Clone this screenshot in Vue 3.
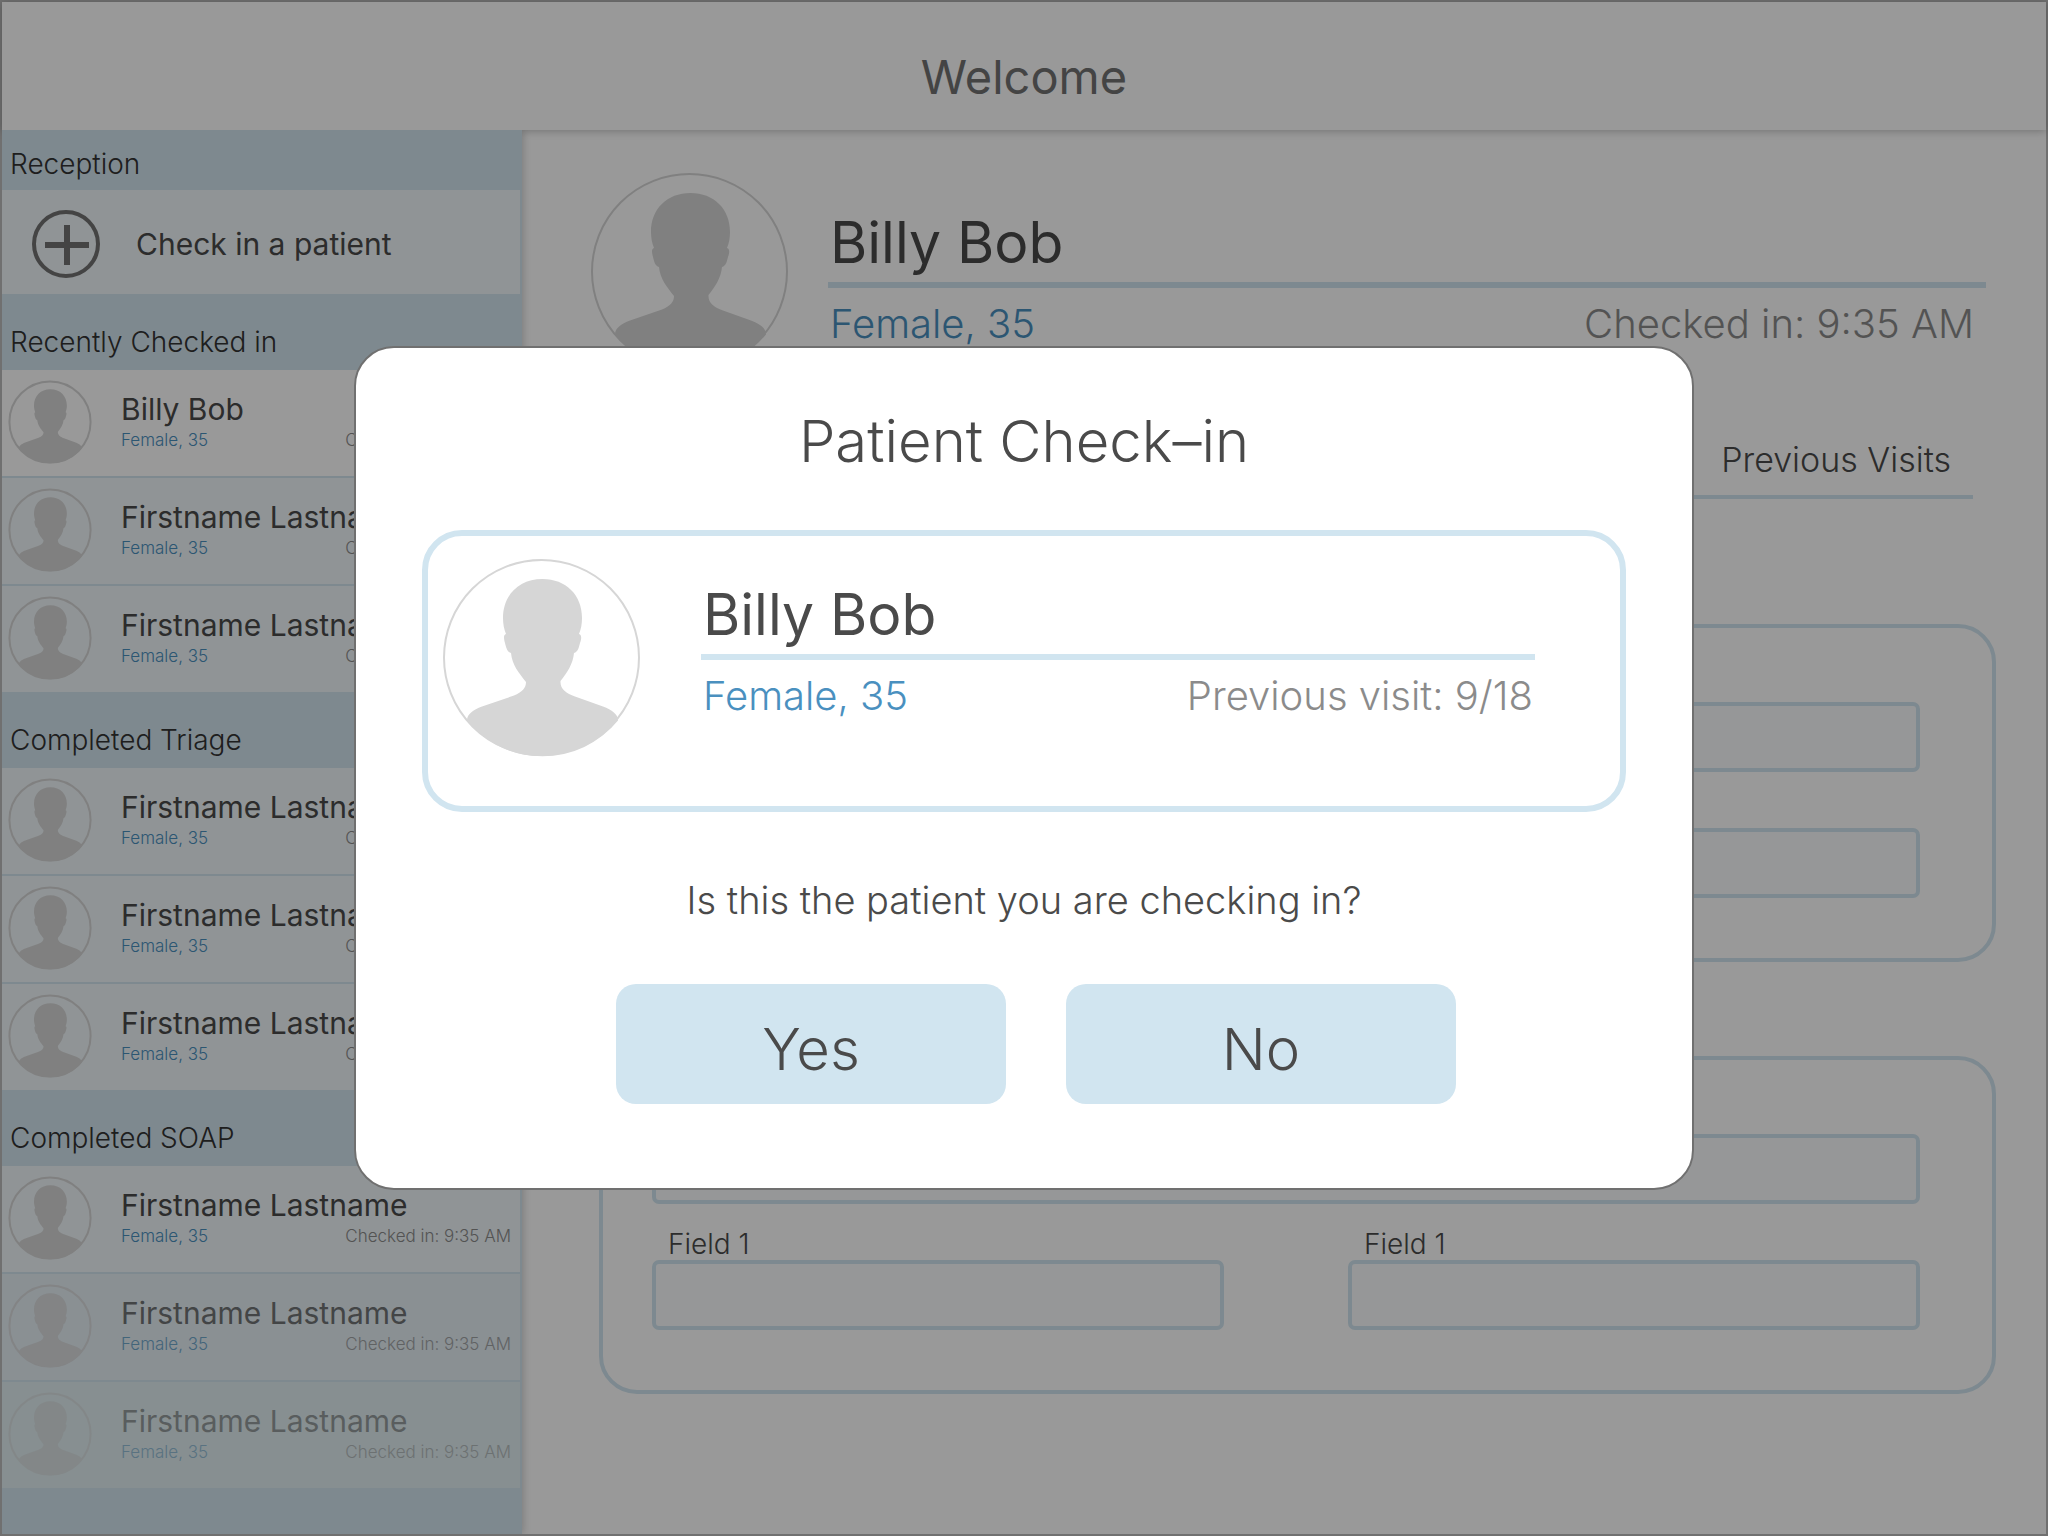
<script setup>
import { h } from 'vue'

const Avatar = () =>
  h('svg', { viewBox: '0 0 197 197', 'aria-hidden': 'true' }, [
    h('circle', {
      cx: '98.5', cy: '98.5', r: '97.5', fill: 'none',
      stroke: '#d6d6d6', 'stroke-width': '2', 'vector-effect': 'non-scaling-stroke',
    }),
    h('path', {
      fill: '#d6d6d6',
      d: 'M99.500 20C76 20 60 36 60 59C60 65 61 70 63 75C60 76 61 80 62 84C63 88 64 93 68 94C69 106 76 114 83 123C83 129 79 133 71 136.500L39 147.500C30 151 24 155 24 161.500A97.500 97.500 0 0 0 175 161.500C175 155 169 151 160 147.500L132 137.500C123 134 117 130 117.500 122C124 114 130 105 131 94C135 93 136 88 137 84C138.500 80 139 76 136 75C138 70 139 65 139 59C139 36 123 20 99.500 20Z',
    }),
  ])

const person = (name, tone = '') => ({ name, tone, detail: 'Female, 35', time: 'Checked in: 9:35 AM' })

const groups = [
  {
    title: 'Recently Checked in',
    patients: [person('Billy Bob', 'selected'), person('Firstname Lastname'), person('Firstname Lastname')],
  },
  {
    title: 'Completed Triage',
    patients: [person('Firstname Lastname'), person('Firstname Lastname'), person('Firstname Lastname')],
  },
  {
    title: 'Completed SOAP',
    patients: [person('Firstname Lastname'), person('Firstname Lastname', 'faded'), person('Firstname Lastname', 'faint')],
  },
]

const cards = ['a', 'b']
</script>

<template>
  <div class="shell">
    <header class="topbar">
      <h1>Welcome</h1>
    </header>

    <div class="body">
      <aside class="sidebar">
        <h2 class="section-title first">Reception</h2>
        <button class="check-in" type="button">
          <svg class="plus" viewBox="0 0 68 68" aria-hidden="true">
            <circle cx="34" cy="34" r="32" fill="none" stroke="#727272" stroke-width="4" />
            <path d="M13 35H57M35 15V55" fill="none" stroke="#727272" stroke-width="6" />
          </svg>
          <span>Check in a patient</span>
        </button>

        <section v-for="g in groups" :key="g.title">
          <h2 class="section-title">{{ g.title }}</h2>
          <ul class="patients">
            <li v-for="(p, i) in g.patients" :key="i" class="patient" :class="p.tone">
              <Avatar class="avatar-small" />
              <div class="patient-text">
                <p class="patient-name">{{ p.name }}</p>
                <p class="patient-meta">
                  <span class="blue">{{ p.detail }}</span>
                  <span class="grey">{{ p.time }}</span>
                </p>
              </div>
            </li>
          </ul>
        </section>
      </aside>

      <main class="main">
        <section class="profile">
          <Avatar class="avatar" />
          <div class="info">
            <h2 class="name">Billy Bob</h2>
            <p class="meta">
              <span class="blue">Female, 35</span>
              <span class="grey">Checked in: 9:35 AM</span>
            </p>
          </div>
        </section>

        <nav class="tabs">
          <a href="#previous">Previous Visits</a>
        </nav>

        <form class="cards">
          <section v-for="c in cards" :key="c" class="card">
            <div class="field wide">
              <label :for="c + 1">Field 1</label>
              <input :id="c + 1" type="text" />
            </div>
            <div class="field">
              <label :for="c + 2">Field 1</label>
              <input :id="c + 2" type="text" />
            </div>
            <div class="field">
              <label :for="c + 3">Field 1</label>
              <input :id="c + 3" type="text" />
            </div>
          </section>
        </form>
      </main>
    </div>

    <div class="overlay">
      <div class="dialog" role="dialog" aria-modal="true" aria-labelledby="dialog-title">
        <h2 id="dialog-title" class="dialog-title">Patient Check–in</h2>
        <div class="match">
          <Avatar class="avatar" />
          <div class="info">
            <h3 class="name">Billy Bob</h3>
            <p class="meta">
              <span class="blue">Female, 35</span>
              <span class="grey">Previous visit: 9/18</span>
            </p>
          </div>
        </div>
        <p class="question">Is this the patient you are checking in?</p>
        <div class="actions">
          <button type="button">Yes</button>
          <button type="button">No</button>
        </div>
      </div>
    </div>
  </div>
</template>

<style>
body {
  margin: 0;
  background: #fff;
}
</style>

<style scoped>
.shell,
.shell * {
  box-sizing: border-box;
}

.shell {
  display: flex;
  flex-direction: column;
  min-height: 100vh;
  border: 2px solid #bbb;
  background: #fff;
  color: #4a4a4a;
  font-family: Inter, "Liberation Sans", sans-serif;
  font-weight: 300;
}

h1,
h2,
h3,
p,
ul {
  margin: 0;
  padding: 0;
  font-weight: inherit;
}

button,
input {
  font: inherit;
  color: inherit;
}

.topbar {
  padding: 45px 0 23px;
  text-align: center;
  box-shadow: 0 1px 8px rgba(0, 0, 0, 0.25);
}

.topbar h1 {
  color: #727272;
  font-size: 47px;
  font-weight: 400;
  line-height: 60px;
}

.body {
  display: flex;
  flex: 1;
}

.sidebar {
  position: relative;
  flex: 0 0 520px;
  padding-right: 2px;
  background: #d2e5ef;
  box-shadow: 1px 0 8px rgba(0, 0, 0, 0.2);
  clip-path: inset(0 -12px 0 0);
}

.section-title {
  padding: 30px 8px 10px;
  color: #333;
  font-size: 28px;
  line-height: 36px;
}

.section-title.first {
  padding: 16px 8px 8px;
}

.check-in {
  display: flex;
  align-items: center;
  gap: 36px;
  width: 100%;
  height: 104px;
  padding: 4px 30px 0;
  border: 0;
  background: #f0f7fa;
  font-size: 30px;
  font-weight: 400;
}

.plus {
  width: 68px;
  height: 68px;
}

.patients {
  display: flex;
  flex-direction: column;
  gap: 2px;
  list-style: none;
}

.patient {
  display: flex;
  gap: 30px;
  height: 106px;
  padding: 0 9px 0 7px;
  background: #f0f7fa;
}

.selected {
  background: #fff;
}

.faded {
  background: #e6f0f6;
}

.faint {
  background: #e1eff2;
}

.faded > * {
  opacity: 0.75;
}

.faint > * {
  opacity: 0.5;
}

.avatar-small {
  flex: none;
  width: 82px;
  height: 82px;
  margin-top: 11px;
  overflow: visible;
}

.patient-text {
  flex: 1;
  padding-top: 20px;
}

.patient-name {
  font-size: 30px;
  font-weight: 400;
  line-height: 38px;
}

.patient-meta {
  display: flex;
  justify-content: space-between;
  font-size: 17px;
  line-height: 24px;
}

.blue {
  color: #4a90bf;
}

.grey {
  color: #8b8b8b;
}

.main {
  flex: 1;
  padding: 43px 50px 40px 69px;
}

.avatar {
  flex: none;
  width: 197px;
  height: 197px;
  overflow: visible;
}

.profile {
  display: flex;
  gap: 40px;
  margin-right: 10px;
}

.info {
  flex: 1;
}

.profile .info {
  padding-top: 35px;
}

.name {
  padding: 0 2px 4px;
  border-bottom: 6px solid #d1e5f0;
  font-size: 57px;
  font-weight: 400;
  line-height: 70px;
}

.meta {
  display: flex;
  justify-content: space-between;
  padding: 12px 2px 0;
  font-size: 40px;
  line-height: 48px;
}

.profile .meta {
  padding-right: 12px;
}

.tabs {
  display: flex;
  justify-content: flex-end;
  margin: 69px 23px 0 8px;
  padding: 0 22px 14px;
  border-bottom: 4px solid #d1e5f0;
  font-size: 34px;
  line-height: 42px;
}

.tabs a {
  color: inherit;
  text-decoration: none;
}

.cards {
  display: flex;
  flex-direction: column;
  gap: 94px;
  margin: 125px 0 0 8px;
}

.card {
  display: grid;
  grid-template-columns: 1fr 1fr;
  gap: 24px 124px;
  padding: 42px 72px 60px 49px;
  border: 4px solid #d1e5f0;
  border-radius: 38px;
}

.field {
  display: flex;
  flex-direction: column;
}

.wide {
  grid-column: 1 / -1;
}

.field label {
  padding-left: 16px;
  font-size: 28px;
  line-height: 32px;
}

.field input {
  width: 100%;
  height: 70px;
  padding: 0 16px;
  border: 4px solid #d1e5f0;
  border-radius: 7px;
  background: #fafcfe;
  font-size: 28px;
}

.overlay {
  position: fixed;
  inset: 0;
  display: flex;
  align-items: center;
  justify-content: center;
  background: rgba(0, 0, 0, 0.4);
}

.dialog {
  width: 90%;
  max-width: 1340px;
  padding: 58px 66px 84px;
  border: 2px solid #707070;
  border-radius: 40px;
  background: #fff;
  text-align: center;
}

.dialog-title {
  font-size: 58px;
  line-height: 70px;
}

.match {
  display: flex;
  gap: 61px;
  height: 282px;
  margin-top: 54px;
  padding: 23px 85px 0 15px;
  border: 6px solid #d1e5f0;
  border-radius: 40px;
  text-align: left;
}

.match .info {
  padding-top: 21px;
}

.question {
  margin-top: 64px;
  font-size: 38px;
  line-height: 48px;
}

.actions {
  display: flex;
  justify-content: center;
  gap: 60px;
  margin-top: 60px;
  padding-left: 24px;
}

.actions button {
  width: 390px;
  height: 120px;
  padding: 10px 0 0;
  border: 0;
  border-radius: 20px;
  background: #d1e5f0;
  font-size: 58px;
}
</style>
